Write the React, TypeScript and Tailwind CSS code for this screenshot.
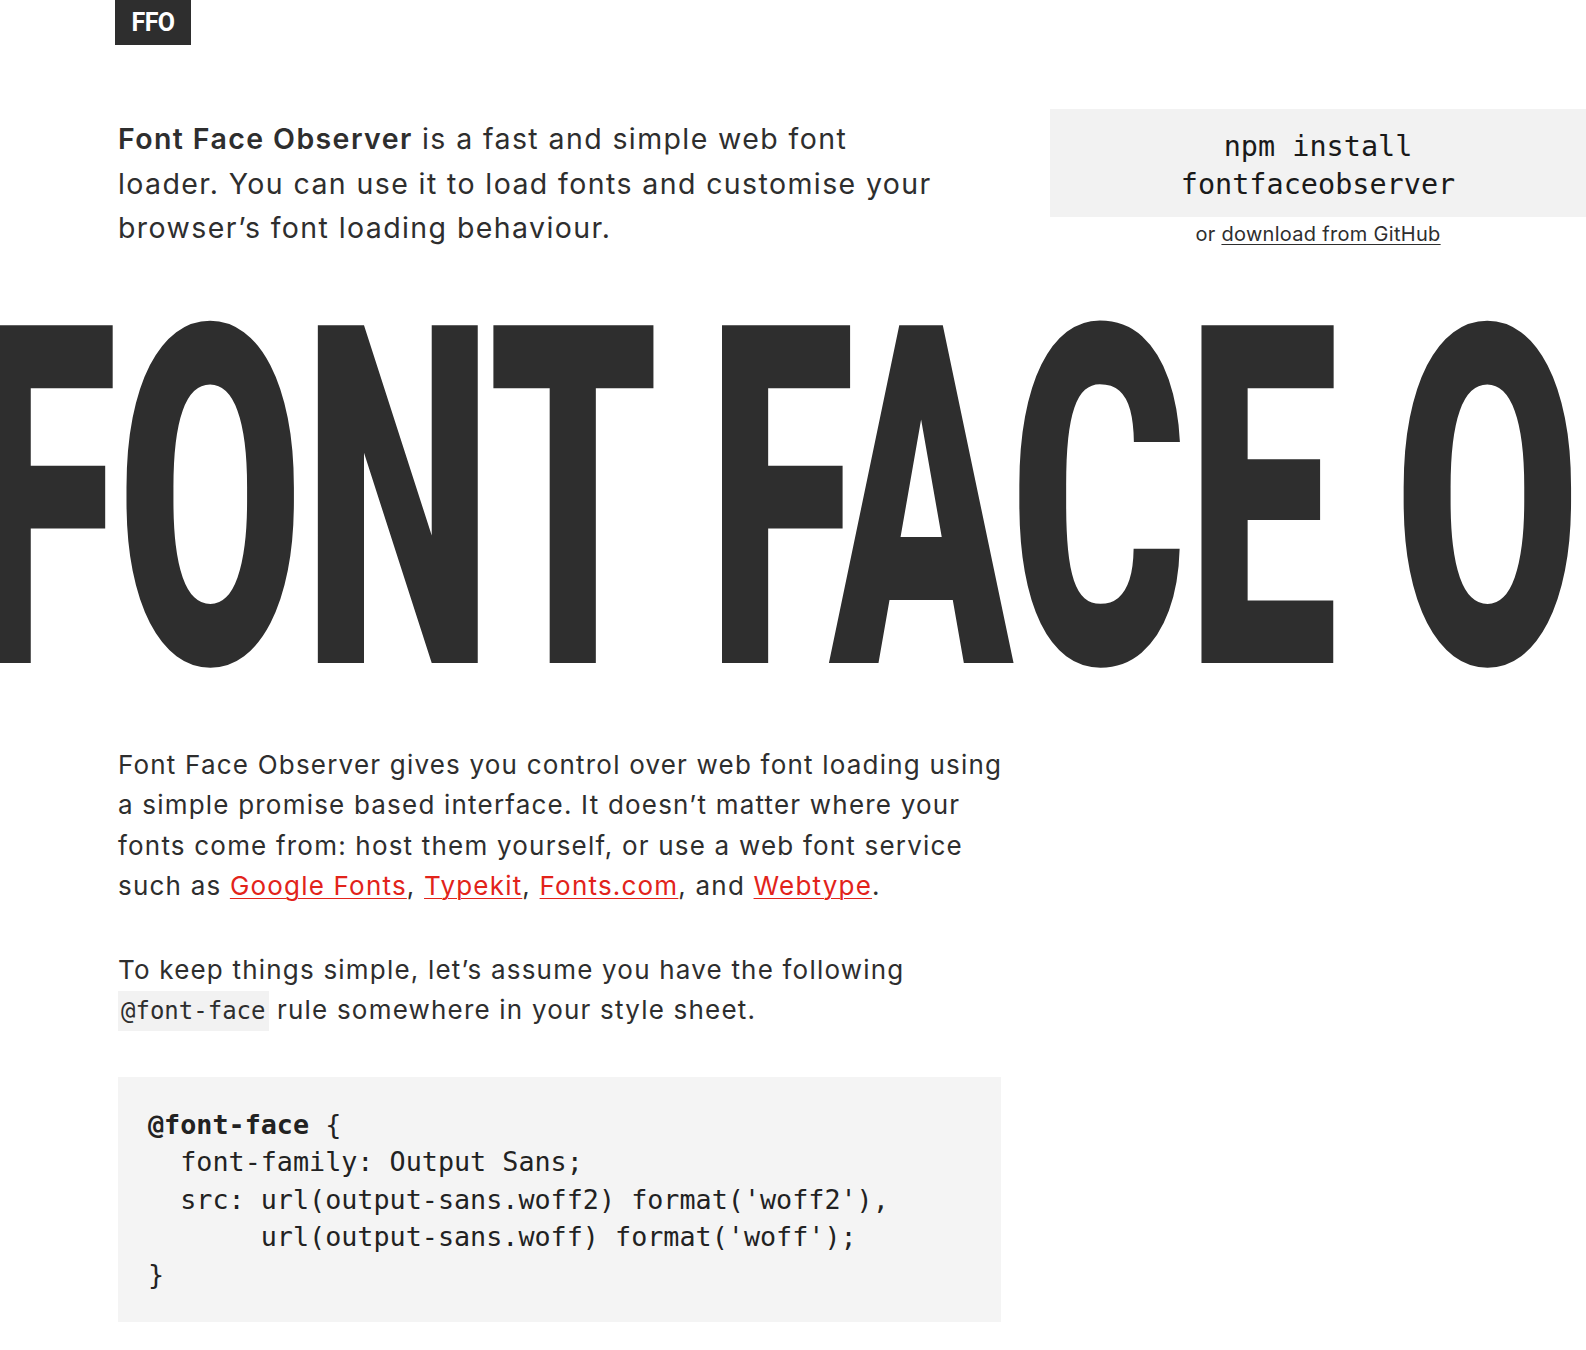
const sans = "font-['Inter','Roboto','Liberation_Sans',sans-serif]";
const mono = "font-['DejaVu_Sans_Mono','Liberation_Mono',monospace]";

const links = ["Google Fonts", "Typekit", "Fonts.com", "Webtype"];

function RedLink({ children }: { children: string }) {
  return (
    <a href="#" className="text-[#e2231a] underline decoration-1 underline-offset-[3px]">
      {children}
    </a>
  );
}

export default function App() {
  return (
    <div className={`min-h-screen overflow-hidden bg-white text-[#2e2e2e] ${sans}`}>
      <header className="pl-[115px]">
        <a
          href="#"
          className="flex h-[45px] w-[76px] items-center justify-center bg-[#2e2e2e] font-['Roboto',sans-serif] text-[25px] font-bold tracking-[-0.5px] text-white"
        >
          FFO
        </a>
      </header>

      <section className="mt-[64px] flex items-start">
        <p className="ml-[118px] mt-[8px] w-[900px] text-[28.5px] leading-[44.5px] tracking-[1.4px]">
          <strong className="font-semibold">Font Face Observer</strong> is a fast and simple web font
          <br />
          loader. You can use it to load fonts and customise your
          <br />
          browser’s font loading behaviour.
        </p>
        <aside className="ml-auto w-[536px] shrink-0">
          <div className={`bg-[#f2f2f2] pb-[14px] pt-[19px] text-center text-[28.5px] leading-[37.5px] text-[#1a1a1a] ${mono}`}>
            npm install
            <br />
            fontfaceobserver
          </div>
          <p className="mt-[5px] text-center text-[20px] leading-[24px] tracking-[0.3px]">
            or{" "}
            <a href="#" className="underline decoration-1 underline-offset-[3px]">
              download from GitHub
            </a>
          </p>
        </aside>
      </section>

      <h1 className="mt-[12px] h-[475px] overflow-hidden whitespace-nowrap">
        <span className="-ml-[30px] inline-block origin-left scale-x-[0.567] font-['Roboto',sans-serif] text-[475px] font-black leading-none tracking-normal text-[#2e2e2e] [word-spacing:-18px]">
          FONT FACE OBSERVER
        </span>
      </h1>

      <main className="ml-[118px] w-[980px] pb-[30px]">
        <p className="mt-[7px] text-[26px] leading-[40.5px] tracking-[1.2px]">
          Font Face Observer gives you control over web font loading using
          <br />
          a simple promise based interface. It doesn’t matter where your
          <br />
          fonts come from: host them yourself, or use a web font service
          <br />
          such as <RedLink>{links[0]}</RedLink>, <RedLink>{links[1]}</RedLink>,{" "}
          <RedLink>{links[2]}</RedLink>, and <RedLink>{links[3]}</RedLink>.
        </p>

        <p className="mt-[43px] text-[26px] leading-[40.5px] tracking-[1.2px]">
          To keep things simple, let’s assume you have the following
          <br />
          <code className={`bg-[#f2f2f2] px-[3px] py-[6px] text-[24px] tracking-normal ${mono}`}>@font-face</code> rule
          somewhere in your style sheet.
        </p>

        <pre className={`mt-[45px] w-[883px] bg-[#f4f4f4] px-[30px] py-[29px] text-[26.75px] leading-[37.5px] text-[#222] ${mono}`}>
          <span className="font-bold">@font-face</span> {"{"}
          {"\n"}
          {"  font-family: Output Sans;\n"}
          {"  src: url(output-sans.woff2) format('woff2'),\n"}
          {"       url(output-sans.woff) format('woff');\n"}
          {"}"}
        </pre>
      </main>
    </div>
  );
}
